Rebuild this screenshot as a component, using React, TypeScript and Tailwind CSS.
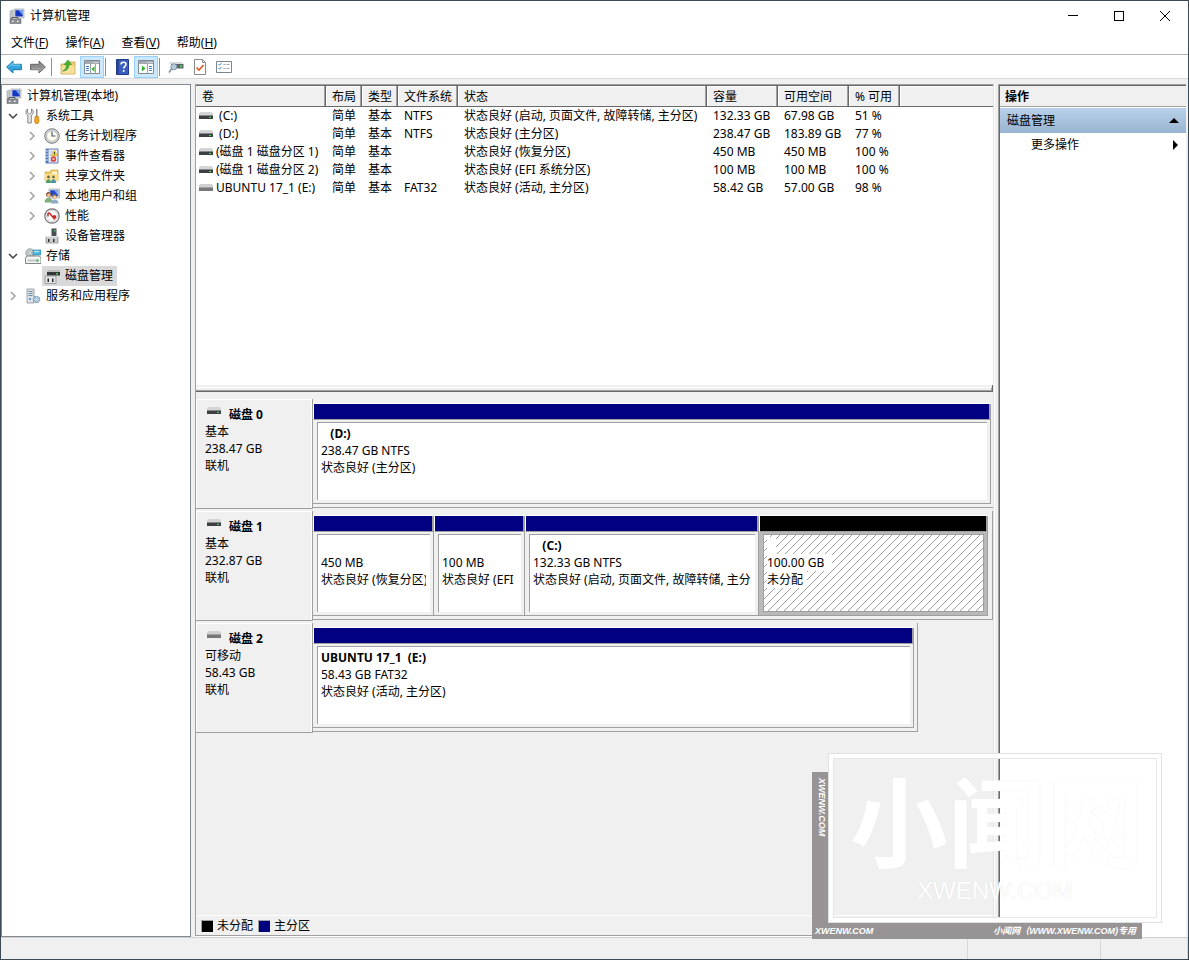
import React, { useState } from "react";
import clsx from "clsx";

interface IconProps {
  className?: string;
}

/* ---------- icons ---------- */

const ComputerIcon: React.FC<IconProps> = ({ className }) => (
  <svg viewBox="0 0 16 16" className={clsx("h-4 w-4 shrink-0", className)}>
    <path d="M1 3l3-1v8l-3 1z" fill="#c3c8cc" stroke="#8b9298" strokeWidth=".5" />
    <path d="M5 1h10v9H5z" fill="#dfe3e6" stroke="#8d959b" strokeWidth=".6" />
    <path d="M6.300 2.200h7.500v6.300H6.300z" fill="#1537c4" />
    <path d="M9.500 2.200h4.300v5z" fill="#7fa8f0" />
    <path d="M1 11h11v4.500H1z" fill="#8a8f93" stroke="#565b5f" strokeWidth=".5" />
    <path d="M3 11V9.500h6V11" fill="none" stroke="#565b5f" />
    <path d="M3 12.500h1.500v1.500H3zM8 12.500h1.500v1.500H8z" fill="#f2f2f2" />
  </svg>
);

const ToolsIcon = () => (
  <svg viewBox="0 0 16 16" className="h-4 w-4 shrink-0">
    <path d="M2.500 1v3.500L4.500 6l2-1.500V1C9 2 9 6 6.300 7.300V15H2.800V7.300C.3 6 .5 2 2.500 1z" fill="#e6e6e6" stroke="#6e6e6e" strokeWidth=".8" />
    <path d="M11 1h1.500v8H11z" fill="#8b8b8b" />
    <path d="M10 8.500h3.500l.5 5-1 2h-2.500l-1-2z" fill="#f0a321" stroke="#b97408" strokeWidth=".6" />
  </svg>
);

const ClockIcon = () => (
  <svg viewBox="0 0 16 16" className="h-4 w-4 shrink-0">
    <circle cx="8" cy="8" r="7.300" fill="#d3d6d9" stroke="#6b7075" strokeWidth=".9" />
    <circle cx="8" cy="8" r="5.300" fill="#fffbe9" stroke="#9aa0a5" strokeWidth=".5" />
    <path d="M8 3.500V8h3.500" fill="none" stroke="#45618f" strokeWidth="1.200" />
  </svg>
);

const EventIcon = () => (
  <svg viewBox="0 0 16 16" className="h-4 w-4 shrink-0">
    <path d="M2 1h12v14H2z" fill="#e8eefa" stroke="#3c5c99" strokeWidth=".8" />
    <path d="M2 1h2.500v14H2z" fill="#5477b8" />
    <path d="M1 3h3M1 6h3M1 9h3M1 12h3" stroke="#dfe5ee" />
    <path d="M6 4h3M6 7h2M6 10h2M6 13h6" stroke="#8da4cf" strokeWidth=".8" />
    <path d="M10.500 2.500l3.200 5.200H7.300z" fill="#ffd632" stroke="#c99700" strokeWidth=".5" />
    <path d="M10.500 4v2M10.500 6.500v.8" stroke="#222" strokeWidth=".8" />
    <circle cx="9.500" cy="11" r="2.700" fill="#e04034" />
    <path d="M8.500 10l2 2m0-2l-2 2" stroke="#fff" strokeWidth=".8" />
  </svg>
);

const SharedFolderIcon = () => (
  <svg viewBox="0 0 16 16" className="h-4 w-4 shrink-0">
    <path d="M1 4h5l1-2h7v11H1z" fill="#f2cb5e" stroke="#c39a2f" strokeWidth=".6" />
    <path d="M8 3.500h5V6H8z" fill="#fff4cf" />
    <path d="M1 6h13.500v7H1z" fill="#fbdf8c" />
    <circle cx="4.500" cy="9" r="1.400" fill="#6a6a50" />
    <circle cx="9.500" cy="9" r="1.400" fill="#6a6a50" />
    <path d="M2 15c0-5 5-5 5 0z" fill="#4d9c78" />
    <path d="M7 15c0-5 5-5 5 0z" fill="#4690a8" />
  </svg>
);

const UsersIcon = () => (
  <svg viewBox="0 0 16 16" className="h-4 w-4 shrink-0">
    <path d="M5 1h10.500v9H5z" fill="#dfe3e6" stroke="#8d959b" strokeWidth=".6" />
    <path d="M6.200 2.200h8v6h-8z" fill="#1f48cc" />
    <path d="M10 2.200h4.200v5z" fill="#86aef2" />
    <circle cx="4.500" cy="6.500" r="2.500" fill="#8c5a34" />
    <circle cx="4.800" cy="7.200" r="1.600" fill="#f0c79f" />
    <path d="M.5 14.500c0-6.500 8-6.500 8 0z" fill="#7fae7a" />
    <circle cx="10.500" cy="8.500" r="2.300" fill="#a9804a" />
    <circle cx="10.700" cy="9.200" r="1.500" fill="#f4d3ae" />
    <path d="M7 15.500c0-5.500 7.500-5.500 7.500 0z" fill="#8fabc9" />
  </svg>
);

const PerformanceIcon = () => (
  <svg viewBox="0 0 16 16" className="h-4 w-4 shrink-0">
    <circle cx="8" cy="8" r="7.200" fill="#fff" stroke="#6f6f6f" strokeWidth="1.200" />
    <circle cx="8" cy="8" r="5.500" fill="#fdfdfd" stroke="#b5b5b5" strokeWidth=".6" />
    <path d="M4 8.500V5.500l1.500-.5 4.500 5.500V7M11.500 7.500v3" fill="none" stroke="#c3201c" strokeWidth="1.400" />
  </svg>
);

const DeviceIcon = () => (
  <svg viewBox="0 0 16 16" className="h-4 w-4 shrink-0">
    <path d="M7.500.500h5V9h-5z" fill="#4c4f52" />
    <path d="M10 2h1.500v1.500H10z" fill="#63d463" />
    <path d="M2 9h12v6H2z" fill="#c9ccce" stroke="#7d8184" strokeWidth=".7" />
    <path d="M4 11h1.500v3H4zM9 11h1.500v3H9z" fill="#2d2f31" />
    <path d="M3 8h10l1 1.500H2z" fill="#e7e8e9" />
  </svg>
);

const StorageIcon = () => (
  <svg viewBox="0 0 16 16" className="h-4 w-4 shrink-0">
    <circle cx="5" cy="5" r="4.300" fill="#c3c8cb" stroke="#7d8488" strokeWidth=".6" />
    <circle cx="5" cy="5" r="1.200" fill="#fff" stroke="#8f979b" strokeWidth=".5" />
    <path d="M8 2h8v5H8z" fill="#49b8e0" stroke="#2481a6" strokeWidth=".6" />
    <path d="M9 3h5v1.200H9z" fill="#b8e7f7" />
    <path d="M.5 10L2 8h12.500L16 10v5.500H.5z" fill="#f3f4f4" stroke="#666a6d" strokeWidth=".8" />
    <path d="M2.500 11.500h11v2h-11z" fill="#c3c6c8" />
    <path d="M11.500 11.500h2v2h-2z" fill="#2eb235" />
  </svg>
);

const DiskManagementIcon = () => (
  <svg viewBox="0 0 16 16" className="h-4 w-4 shrink-0">
    <path d="M3 3.500L4.500 2H15l1 1.500V4H3z" fill="#b9bcbe" />
    <path d="M3 4h13v3.500H3z" fill="#33373a" />
    <path d="M12 5h2v1.500h-2z" fill="#40d140" />
    <path d="M1 8h11v7.500H1z" fill="#e2e4e5" stroke="#83878a" strokeWidth=".7" />
    <path d="M3.500 10.500H5V14H3.500zM8 10.500h1.500V14H8z" fill="#2b2d2f" />
  </svg>
);

const ServicesIcon = () => (
  <svg viewBox="0 0 16 16" className="h-4 w-4 shrink-0">
    <path d="M2 1h7v14H2z" fill="#dde2e6" stroke="#7d868d" strokeWidth=".7" />
    <path d="M3.500 3.500h4M3.500 5.500h4M3.500 7.500h4" stroke="#6c8ba4" />
    <path d="M4 10h2v2H4z" fill="#55a0cc" />
    <circle cx="11.500" cy="11.500" r="3" fill="#dceaf5" stroke="#6f97bb" strokeWidth="1.500" strokeDasharray="1.500 .8" />
    <circle cx="11.500" cy="11.500" r="2.700" fill="none" stroke="#8db1cf" />
    <circle cx="11.500" cy="11.500" r="1" fill="#fff" stroke="#6f97bb" strokeWidth=".6" />
  </svg>
);

// Small drive glyph, the led is off for removable media
const DriveIcon: React.FC<{ led?: boolean }> = ({ led = true }) => (
  <svg viewBox="0 0 14 8" className="h-2 w-3.5 shrink-0" shapeRendering="crispEdges">
    <path d="M1 0h12v1h1v3H0V1h1z" fill={led ? "#d3d5d7" : "#cfd0d1"} />
    <path d="M0 4h14v3H0z" fill={led ? "#3c4043" : "#777"} />
    <path d="M0 3h14v1H0z" fill={led ? "#85898c" : "#a2a2a2"} />
    {led && <path d="M10 5h2v1h-2z" fill="#3fe04a" />}
  </svg>
);

const ArrowIcon: React.FC<{ forward?: boolean }> = ({ forward }) => (
  <svg viewBox="0 0 16 14" className={clsx("h-3.5 w-4", forward && "rotate-180")}>
    <path
      d="M.6 7L7 1v3.300h8.400v5.400H7V13z"
      fill={forward ? "#8d8d8d" : "#32a5e0"}
      stroke={forward ? "#5e5e5e" : "#1b6d9d"}
      strokeWidth=".9"
    />
    <path d="M2.500 6.800L6.300 3.200v2h8" fill="none" stroke={forward ? "#b5b5b5" : "#8fd6f7"} strokeWidth=".9" />
  </svg>
);

const FolderUpIcon = () => (
  <svg viewBox="0 0 16 16" className="h-4 w-4">
    <path d="M1 5h6l1.500-2H15v12H1z" fill="#f0cd78" stroke="#c09a41" strokeWidth=".7" />
    <path d="M1.500 7h13v7.500h-13z" fill="#f8df9c" />
    <path d="M2.500 12c2.500-1 4-3 4-6.500H4L8 1l3.500 4.500H9C9 9.500 7 12 2.500 12z" fill="#45b52f" stroke="#2c8a1c" strokeWidth=".5" />
  </svg>
);

const PaneIcon: React.FC<{ side: "left" | "right" }> = ({ side }) => (
  <svg viewBox="0 0 16 14" className="h-3.5 w-4">
    <path d="M.5.500h15v13H.5z" fill="#fff" stroke="#808a93" />
    <path d="M1 1h14v3H1z" fill="#a2aab2" />
    <path d="M9.500 2.500h1m1 0h1m1 0h1" stroke="#fff" />
    {side === "left" ? (
      <>
        <path d="M6.500 4v9.500M11.500 4v9.500" stroke="#9aa3ab" />
        <path d="M2 6.500h3M2 8.500h3M2 10.500h3" stroke="#4d83bd" />
        <path d="M10.500 6v6L7.500 9z" fill="#37b030" />
      </>
    ) : (
      <>
        <path d="M9.500 4v9.500" stroke="#9aa3ab" />
        <path d="M11 6.500h3M11 8.500h3M11 10.500h3" stroke="#4d83bd" />
        <path d="M4 5.500v6L7.500 8.500z" fill="#37b030" />
      </>
    )}
  </svg>
);

const HelpIcon = () => (
  <svg viewBox="0 0 13 16" className="h-4 w-[13px]">
    <path d="M.5.500h12v15H.5z" fill="#3c5fbe" stroke="#1e3c8c" />
    <path d="M1 1h2v14H1z" fill="#274699" />
    <path d="M5 5.500c0-3 5-3 5-.2 0 2-2.300 2-2.300 4.200" fill="none" stroke="#fff" strokeWidth="1.600" />
    <path d="M6.800 11h1.800v1.800H6.800z" fill="#fff" />
  </svg>
);

const DriveSearchIcon = () => (
  <svg viewBox="0 0 16 14" className="h-3.5 w-4">
    <path d="M2 2h12l1.500 2H1z" fill="#d9dbdd" />
    <path d="M3 4h12.500v4.500H3z" fill="#5d6468" />
    <path d="M12 5.200h2v2h-2z" fill="#3fdc49" />
    <circle cx="5.800" cy="6.800" r="3" fill="#b5cbdb" stroke="#8297a7" />
    <path d="M3.600 9L1 12.500" stroke="#7b8a95" strokeWidth="1.500" />
  </svg>
);

const CheckPageIcon = () => (
  <svg viewBox="0 0 12 16" className="h-4 w-3">
    <path d="M.5.500h8l3 3v12H.5z" fill="#fff" stroke="#8a8a8a" />
    <path d="M8.500.500v3h3" fill="none" stroke="#8a8a8a" />
    <path d="M2.500 8.500L5 11l4.500-5" fill="none" stroke="#e2541b" strokeWidth="1.600" />
  </svg>
);

const ListIcon = () => (
  <svg viewBox="0 0 16 12" className="h-3 w-4">
    <path d="M.5.500h15v11H.5z" fill="#fff" stroke="#7c858c" />
    <path d="M2.500 3.200l1 1 1.800-2M2.500 7.200l1 1 1.800-2" fill="none" stroke="#2c7ac4" />
    <path d="M7.500 3.500h2m1 0h3M7.500 7.500h2m1 0h3" stroke="#a0a7ad" />
  </svg>
);

/* ---------- data ---------- */

const menus = [
  { label: "文件", key: "F" },
  { label: "操作", key: "A" },
  { label: "查看", key: "V" },
  { label: "帮助", key: "H" },
];

interface TreeNode {
  label: string;
  icon: React.ReactNode;
  level: number;
  open?: boolean;
}

const tree: TreeNode[] = [
  { label: "计算机管理(本地)", icon: <ComputerIcon />, level: 0 },
  { label: "系统工具", icon: <ToolsIcon />, level: 1, open: true },
  { label: "任务计划程序", icon: <ClockIcon />, level: 2, open: false },
  { label: "事件查看器", icon: <EventIcon />, level: 2, open: false },
  { label: "共享文件夹", icon: <SharedFolderIcon />, level: 2, open: false },
  { label: "本地用户和组", icon: <UsersIcon />, level: 2, open: false },
  { label: "性能", icon: <PerformanceIcon />, level: 2, open: false },
  { label: "设备管理器", icon: <DeviceIcon />, level: 2 },
  { label: "存储", icon: <StorageIcon />, level: 1, open: true },
  { label: "磁盘管理", icon: <DiskManagementIcon />, level: 2 },
  { label: "服务和应用程序", icon: <ServicesIcon />, level: 1, open: false },
];

const indents = ["pl-0.5", "pl-[3px]", "pl-[22px]"];

const columns = [
  { label: "卷", width: "w-[130px]" },
  { label: "布局", width: "w-9" },
  { label: "类型", width: "w-9" },
  { label: "文件系统", width: "w-[60px]" },
  { label: "状态", width: "w-[249px]" },
  { label: "容量", width: "w-[71px]" },
  { label: "可用空间", width: "w-[71px]" },
  { label: "% 可用", width: "w-[51px]" },
];

const volumes = [
  [" (C:)", "简单", "基本", "NTFS", "状态良好 (启动, 页面文件, 故障转储, 主分区)", "132.33 GB", "67.98 GB", "51 %"],
  [" (D:)", "简单", "基本", "NTFS", "状态良好 (主分区)", "238.47 GB", "183.89 GB", "77 %"],
  ["(磁盘 1 磁盘分区 1)", "简单", "基本", "", "状态良好 (恢复分区)", "450 MB", "450 MB", "100 %"],
  ["(磁盘 1 磁盘分区 2)", "简单", "基本", "", "状态良好 (EFI 系统分区)", "100 MB", "100 MB", "100 %"],
  ["UBUNTU 17_1 (E:)", "简单", "基本", "FAT32", "状态良好 (活动, 主分区)", "58.42 GB", "57.00 GB", "98 %"],
];

interface Partition {
  name?: string;
  size: string;
  status: string;
  weight: number;
  free?: boolean;
}

interface Disk {
  name: string;
  kind: string;
  size: string;
  led: boolean;
  frame: string;
  partitions: Partition[];
}

const disks: Disk[] = [
  {
    name: "磁盘 0",
    kind: "基本",
    size: "238.47 GB",
    led: true,
    frame: "w-full pr-0.5",
    partitions: [{ name: "   (D:)", size: "238.47 GB NTFS", status: "状态良好 (主分区)", weight: 1 }],
  },
  {
    name: "磁盘 1",
    kind: "基本",
    size: "232.87 GB",
    led: true,
    frame: "w-full border-r pr-1",
    partitions: [
      { size: "450 MB", status: "状态良好 (恢复分区)", weight: 121 },
      { size: "100 MB", status: "状态良好 (EFI 系统分区)", weight: 91 },
      { name: "   (C:)", size: "132.33 GB NTFS", status: "状态良好 (启动, 页面文件, 故障转储, 主分区)", weight: 234 },
      { size: "100.00 GB", status: "未分配", weight: 229, free: true },
    ],
  },
  {
    name: "磁盘 2",
    kind: "可移动",
    size: "58.43 GB",
    led: false,
    frame: "w-[89%] border-r pr-[3px]",
    partitions: [{ name: "UBUNTU 17_1  (E:)", size: "58.43 GB FAT32", status: "状态良好 (活动, 主分区)", weight: 1 }],
  },
];

/* ---------- pieces ---------- */

const Chevron: React.FC<{ open: boolean }> = ({ open }) => (
  <svg viewBox="0 0 10 10" className="h-2.5 w-2.5">
    {open ? (
      <path d="M1 3l4 4 4-4" fill="none" stroke="#404040" strokeWidth="1.500" />
    ) : (
      <path d="M3 1l4 4-4 4" fill="none" stroke="#a0a0a0" strokeWidth="1.500" />
    )}
  </svg>
);

interface ToolButtonProps {
  label: string;
  active?: boolean;
  children: React.ReactNode;
}

const ToolButton: React.FC<ToolButtonProps> = ({ label, active, children }) => (
  <button
    type="button"
    aria-label={label}
    className={clsx(
      "flex h-[22px] w-6 items-center justify-center border",
      active ? "border-[#99d1ff] bg-[#cce8ff]" : "border-transparent hover:bg-[#e5f3ff]"
    )}
  >
    {children}
  </button>
);

const Separator = () => <div className="ml-px mr-1 h-[18px] w-px bg-[#8d8d8d]" />;

const Hatch = () => (
  <svg className="absolute inset-0 h-full w-full" shapeRendering="crispEdges">
    <defs>
      <pattern id="hatch" width="8" height="8" patternUnits="userSpaceOnUse">
        <path
          d="M0 7h1v1H0zM1 6h1v1H1zM2 5h1v1H2zM3 4h1v1H3zM4 3h1v1H4zM5 2h1v1H5zM6 1h1v1H6zM7 0h1v1H7z"
          fill="#a0a0a0"
        />
      </pattern>
    </defs>
    <rect width="100%" height="100%" fill="url(#hatch)" />
  </svg>
);

const PartitionBox: React.FC<{ part: Partition }> = ({ part }) => (
  <button
    type="button"
    className="flex min-w-0 basis-0 flex-col border-t border-white text-left"
    style={{ flexGrow: part.weight }}
  >
    <div
      className={clsx(
        "h-4 w-full border-b border-l border-r-2 border-b-[#a0a0a0] border-l-white border-r-[#a0a0a0]",
        part.free ? "bg-black" : "bg-[#000080]"
      )}
    />
    <div
      className={clsx(
        "w-full border-b border-r border-[#a0a0a0] pb-[3px] pl-1 pr-[3px] pt-0.5",
        part.free ? "bg-[#b9b9b9]" : "bg-[#f0f0f0]"
      )}
    >
      <div
        className={clsx(
          "relative h-[78px] overflow-hidden border-l border-t border-[#a0a0a0] bg-white pl-[3px] pr-1 pt-0.5",
          part.free && "border-b border-r"
        )}
      >
        {part.free && <Hatch />}
        <div className="relative flex flex-col items-start overflow-hidden whitespace-pre leading-[17px]">
          <span className="bg-white font-bold">{part.name ?? "   "}</span>
          <span className={clsx("bg-white", part.free && "pr-2")}>{part.size}</span>
          <span className={clsx("bg-white", part.free && "pr-1")}>{part.status}</span>
        </div>
      </div>
    </div>
  </button>
);

const DiskRow: React.FC<{ disk: Disk }> = ({ disk }) => (
  <div className="mb-0.5 flex h-[110px]">
    <div className="w-[117px] shrink-0 border-b border-r border-[#a0a0a0]">
      <div className="h-full border-l border-r border-t border-white pl-2 pt-1.5 leading-[17px]">
        <div className="flex gap-2 pl-0.5">
          <span className="pt-px">
            <DriveIcon led={disk.led} />
          </span>
          <span className="font-bold">{disk.name}</span>
        </div>
        <div>{disk.kind}</div>
        <div>{disk.size}</div>
        <div>联机</div>
      </div>
    </div>
    <div className="min-w-0 flex-1">
      <div className={clsx("flex h-[109px] border-b border-[#a0a0a0] pb-[3px] pt-1", disk.frame)}>
        {disk.partitions.map((part) => (
          <PartitionBox key={part.size} part={part} />
        ))}
      </div>
    </div>
  </div>
);

const VolumeTable = () => (
  <table className="w-full table-fixed border-separate border-spacing-0 whitespace-pre text-left">
    <thead>
      <tr className="h-[21px] bg-[#f0f0f0]">
        {columns.map((col) => (
          <th
            key={col.label}
            className={clsx(
              "border-b border-[#696969] p-0 pl-1.5 pt-0.5 font-normal shadow-[inset_-1px_0_#696969,inset_-2px_0_#a0a0a0,inset_1px_1px_#fff]",
              col.width
            )}
          >
            {col.label}
          </th>
        ))}
        <th className="border-b border-[#696969] p-0 shadow-[inset_1px_1px_#fff]" />
      </tr>
    </thead>
    <tbody>
      {volumes.map((row) => (
        <tr key={row[0]} className="h-[18px]">
          {row.map((cell, i) => (
            <td key={i} className={clsx("p-0", i === 0 ? "pl-[3px]" : "pl-1.5")}>
              {i === 0 ? (
                <span className="flex items-center gap-[3px]">
                  <DriveIcon led={!cell.startsWith("UBUNTU")} />
                  {cell}
                </span>
              ) : (
                cell
              )}
            </td>
          ))}
          <td className="p-0" />
        </tr>
      ))}
    </tbody>
  </table>
);

const Watermark = () => (
  <div className="pointer-events-none absolute bottom-5 right-[26px] h-[186px] w-[350px] select-none text-white">
    <div className="absolute bottom-0 left-0 top-[19px] w-[17px] bg-[#989495] pl-0.5 pt-1.5 font-['Liberation_Sans',sans-serif] text-[9px] font-bold italic leading-[14px] [writing-mode:vertical-rl]">
      XWENW.COM
    </div>
    <div className="absolute bottom-0 left-0 right-5 flex h-4 items-center justify-between bg-[#989495] pl-[3px] pr-1.5 font-['Liberation_Sans','Noto_Sans_CJK_SC',sans-serif] text-[9px] font-bold italic leading-4">
      <span>XWENW.COM</span>
      <span>小闻网（WWW.XWENW.COM)专用</span>
    </div>
    <div className="absolute bottom-4 left-4 right-0 top-0 border border-[#e0e2e2]">
      <div className="h-full border-4 border-white">
        <div className="flex h-full flex-col items-center border border-[#e6e8e8]">
          <div className="pl-1 pt-2 font-['Noto_Sans_CJK_SC',sans-serif] text-[98px] font-bold leading-[100px] [text-shadow:0_0_1px_#e0e4e4]">
            小闻网
          </div>
          <div className="pt-2.5 font-['Liberation_Sans',sans-serif] text-2xl leading-7 [text-shadow:0_0_1px_#d4d8d8]">
            XWENW.COM
          </div>
        </div>
      </div>
    </div>
  </div>
);

/* ---------- app ---------- */

const App: React.FC = () => {
  const [selected, setSelected] = useState("磁盘管理");

  return (
    <div className="relative flex h-screen flex-col overflow-hidden border border-[#3b4a54] bg-white font-['Noto_Sans','Noto_Sans_CJK_SC',sans-serif] text-[12px] leading-[18px] text-black">
      <header className="flex h-[29px] shrink-0 items-center">
        <ComputerIcon className="ml-2" />
        <h1 className="ml-[5px] flex-1">计算机管理</h1>
        <button type="button" aria-label="最小化" className="flex h-full w-[46px] items-center justify-center">
          <svg viewBox="0 0 10 10" className="h-2.5 w-2.5" shapeRendering="crispEdges">
            <path d="M0 4h10v1H0z" />
          </svg>
        </button>
        <button type="button" aria-label="最大化" className="flex h-full w-[46px] items-center justify-center">
          <svg viewBox="0 0 10 10" className="h-2.5 w-2.5" shapeRendering="crispEdges">
            <path d="M.5.500h9v9h-9z" fill="none" stroke="#000" />
          </svg>
        </button>
        <button type="button" aria-label="关闭" className="flex h-full w-[46px] items-center justify-center">
          <svg viewBox="0 0 10 10" className="h-2.5 w-2.5">
            <path d="M0 0l10 10M10 0L0 10" stroke="#000" />
          </svg>
        </button>
      </header>

      <nav className="flex h-[25px] shrink-0 items-center gap-px border-b border-[#b4b4b4] pl-0.5 pt-0.5">
        {menus.map((menu) => (
          <button key={menu.key} type="button" className="px-2 hover:bg-[#e5f3ff]">
            {menu.label}(<span className="underline">{menu.key}</span>)
          </button>
        ))}
      </nav>

      <div className="flex h-6 shrink-0 items-center border-b border-[#dadada] pl-px pt-px">
        <ToolButton label="后退">
          <ArrowIcon />
        </ToolButton>
        <ToolButton label="前进">
          <ArrowIcon forward />
        </ToolButton>
        <Separator />
        <ToolButton label="上一级">
          <FolderUpIcon />
        </ToolButton>
        <ToolButton label="显示/隐藏控制台树" active>
          <PaneIcon side="left" />
        </ToolButton>
        <Separator />
        <ToolButton label="帮助">
          <HelpIcon />
        </ToolButton>
        <ToolButton label="显示/隐藏操作窗格" active>
          <PaneIcon side="right" />
        </ToolButton>
        <Separator />
        <ToolButton label="重新扫描磁盘">
          <DriveSearchIcon />
        </ToolButton>
        <ToolButton label="属性">
          <CheckPageIcon />
        </ToolButton>
        <ToolButton label="设置">
          <ListIcon />
        </ToolButton>
      </div>

      <div className="flex min-h-0 flex-1 bg-[#f0f0f0] pt-[5px]">
        <aside className="w-[190px] shrink-0 border border-[#828790] bg-white pt-px">
          <ul>
            {tree.map((node) => (
              <li key={node.label} className={clsx("flex h-5 items-center", indents[node.level])}>
                {node.level > 0 && (
                  <span className="mr-0.5 flex w-4 shrink-0 justify-center">
                    {node.open !== undefined && <Chevron open={node.open} />}
                  </span>
                )}
                <button
                  type="button"
                  onClick={() => setSelected(node.label)}
                  className={clsx(
                    "flex h-5 items-center gap-[5px] pl-0.5 pr-1",
                    selected === node.label && "bg-[#d9d9d9]"
                  )}
                >
                  {node.icon}
                  {node.label}
                </button>
              </li>
            ))}
          </ul>
        </aside>

        <main className="ml-1 mr-[3px] flex min-w-0 flex-1 flex-col border-b border-r border-white">
          <div className="flex min-h-0 flex-1 flex-col border border-[#a0a0a0] border-r-[#e3e3e3]">
            <section className="h-[300px] shrink-0 overflow-hidden border-t border-[#696969] bg-white">
              <VolumeTable />
            </section>
            <div className="h-[7px] shrink-0 border-b border-r border-[#696969] pt-0.5">
              <div className="h-full border-b border-r border-t border-[#a0a0a0] border-t-white" />
            </div>
            <section className="min-h-0 flex-1 overflow-hidden pt-[7px]">
              {disks.map((disk) => (
                <DiskRow key={disk.name} disk={disk} />
              ))}
            </section>
            <div className="flex h-5 shrink-0 items-center border-t border-white pl-[5px]">
              <span className="h-3 w-3 border-l border-t border-[#a0a0a0] bg-black" />
              <span className="ml-1">未分配</span>
              <span className="ml-[5px] h-3 w-3 border-l border-t border-[#a0a0a0] bg-[#000080]" />
              <span className="ml-1">主分区</span>
            </div>
          </div>
        </main>

        <aside className="w-[190px] shrink-0 border-r-2 border-[#f0f0f0]">
          <div className="h-full border-l border-t border-[#a0a0a0]">
            <div className="h-full border-l border-t border-[#696969] bg-white">
              <h2 className="h-[21px] border-b border-[#a0a0a0] bg-[#f0f0f0] pl-[5px] pt-px font-bold leading-5">操作</h2>
              <button
                type="button"
                className="mt-px flex h-[25px] w-full items-center justify-between bg-linear-to-b from-[#b9d1ea] to-[#99b4d1] px-[7px]"
              >
                磁盘管理
                <svg viewBox="0 0 10 5" className="h-[5px] w-2.5">
                  <path d="M5 0l5 5H0z" />
                </svg>
              </button>
              <button type="button" className="flex h-6 w-full items-center justify-between pl-[31px] pr-2">
                更多操作
                <svg viewBox="0 0 5 10" className="h-2.5 w-[5px]">
                  <path d="M0 0l5 5-5 5z" />
                </svg>
              </button>
            </div>
          </div>
        </aside>
      </div>

      <footer className="flex h-[22px] shrink-0 justify-end border-t border-[#d0d0d0] bg-[#f0f0f0]">
        <span className="w-[133px] border-l border-[#d7d7d7]" />
        <span className="w-[88px] border-l border-r border-[#d7d7d7]" />
      </footer>

      <Watermark />
    </div>
  );
};

export default App;
